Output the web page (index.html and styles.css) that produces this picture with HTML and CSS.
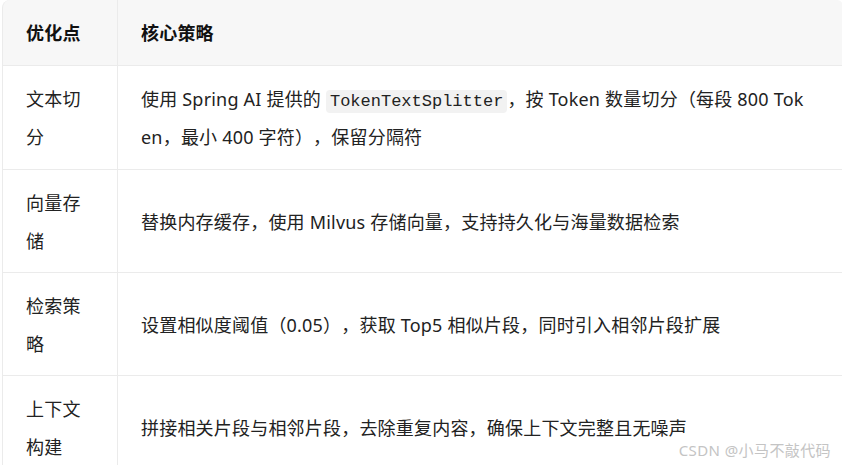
FILE: index.html
```html
<!DOCTYPE html>
<html lang="zh-CN">
<head>
<meta charset="utf-8">
<title>优化点</title>
<link rel="stylesheet" href="styles.css">
</head>
<body>
<div class="page">
  <table class="opt-table">
    <colgroup>
      <col class="col-point">
      <col class="col-strategy">
    </colgroup>
    <thead>
      <tr>
        <th>优化点</th>
        <th>核心策略</th>
      </tr>
    </thead>
    <tbody>
      <tr class="row-first">
        <td>文本切分</td>
        <td>使用 Spring AI 提供的 <code>TokenTextSplitter</code>，按 Token 数量切分（每段 800 Token，最小 400 字符），保留分隔符</td>
      </tr>
      <tr>
        <td>向量存储</td>
        <td>替换内存缓存，使用 Milvus 存储向量，支持持久化与海量数据检索</td>
      </tr>
      <tr>
        <td>检索策略</td>
        <td>设置相似度阈值（0.05），获取 Top5 相似片段，同时引入相邻片段扩展</td>
      </tr>
      <tr>
        <td>上下文构建</td>
        <td>拼接相关片段与相邻片段，去除重复内容，确保上下文完整且无噪声</td>
      </tr>
    </tbody>
  </table>
  <div class="watermark">CSDN @小马不敲代码</div>
</div>
</body>
</html>
```

FILE: styles.css
```css
html, body {
  margin: 0;
  padding: 0;
  background: #ffffff;
  overflow: hidden;
}

.page {
  position: relative;
  width: 842px;
  height: 465px;
  padding-left: 2px;
  box-sizing: border-box;
  font-family: "Noto Sans", "Noto Sans CJK SC", sans-serif;
  color: #222222;
  text-spacing-trim: space-all;
}

.opt-table {
  width: 841px;
  table-layout: fixed;
  border-collapse: separate;
  border-spacing: 0;
  font-size: 18px;
  line-height: 38px;
  letter-spacing: 0.2px;
}

.col-point {
  width: 115px;
}

.opt-table th,
.opt-table td {
  padding: 14px 23px 12px 23px;
  text-align: left;
  vertical-align: middle;
  word-break: break-all;
  border-bottom: 1px solid #ebebeb;
  border-left: 1px solid #ebebeb;
}

.opt-table td:last-child {
  padding-right: 36px;
}

.row-first td {
  padding-bottom: 13px;
}

.opt-table th {
  padding-bottom: 13px;
  background: #f7f7f7;
  font-weight: 700;
  color: #111111;
}

.opt-table th:first-child {
  border-top-left-radius: 8px;
}

.opt-table th:last-child {
  border-top-right-radius: 6px;
}

.opt-table code {
  font-family: "Liberation Mono", "DejaVu Sans Mono", monospace;
  font-size: 17px;
  line-height: 1;
  letter-spacing: 0;
  background: #f2f2f2;
  border-radius: 4px;
  padding: 2px 4px;
}

.watermark {
  position: absolute;
  right: 11px;
  bottom: 6px;
  font-size: 15px;
  line-height: 18px;
  letter-spacing: 0.4px;
  color: #c4c4c4;
  font-family: "Noto Sans", "Noto Sans CJK SC", sans-serif;
}
```
